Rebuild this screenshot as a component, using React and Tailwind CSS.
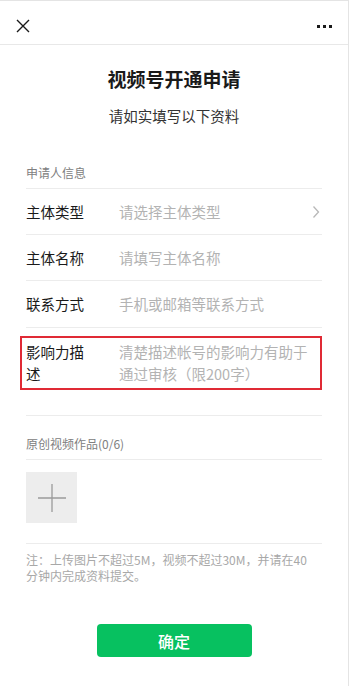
import React from "react";

const font = { fontFamily: '"Noto Sans CJK SC", "Noto Sans", sans-serif' };

function Row({ label, placeholder, chevron, tall }) {
  return (
    <div className={`flex items-center border-b border-[#ececec] ${tall ? "h-[47px]" : "h-[46px]"}`}>
      <div className="w-[64px] shrink-0 text-[14.5px] text-[#1a1a1a]">{label}</div>
      <div className="ml-[29px] flex-1 text-[14.5px] text-[#b3b3b3]">{placeholder}</div>
      {chevron && (
        <svg width="8" height="14" viewBox="0 0 8 14" className="mr-[2px]">
          <path d="M1.5 1.5 L6.5 7 L1.5 12.5" fill="none" stroke="#b8b8b8" strokeWidth="1.3" />
        </svg>
      )}
    </div>
  );
}

export default function App() {
  return (
    <div className="min-h-[686px] w-[351px] bg-white" style={font}>
      <div className="min-h-[686px] w-[349px] border-r border-t border-[#e4e4e4]">
        {/* header */}
        <div className="flex h-[44px] items-start justify-between border-b border-[#e8e8e8] px-[16px] pt-[18px]">
          <svg width="14" height="14" viewBox="0 0 14 14">
            <path d="M1 1 L13 13 M13 1 L1 13" stroke="#1a1a1a" strokeWidth="1.4" />
          </svg>
          <div className="mt-[6px] flex gap-[3px]">
            <span className="h-[3px] w-[3px] bg-[#1a1a1a]" />
            <span className="h-[3px] w-[3px] bg-[#1a1a1a]" />
            <span className="h-[3px] w-[3px] bg-[#1a1a1a]" />
          </div>
        </div>

        {/* title */}
        <div className="pt-[21px] text-center text-[19px] font-bold leading-[26px] text-[#1a1a1a]">
          视频号开通申请
        </div>
        <div className="mt-[14px] text-center text-[14.5px] leading-[20px] text-[#333]">
          请如实填写以下资料
        </div>

        <div className="px-[26px]">
          {/* section 1 */}
          <div className="mt-[38px] border-b border-[#ececec] pb-[6px] text-[12px] leading-[18px] text-[#808080]">
            申请人信息
          </div>
          <Row label="主体类型" placeholder="请选择主体类型" chevron />
          <Row label="主体名称" placeholder="请填写主体名称" />
          <Row label="联系方式" placeholder="手机或邮箱等联系方式" tall />

          <div className="border-b border-[#ececec] pb-[25px] pt-[8px]">
            <div className="-ml-[6px] flex border-2 border-[#e02a35] py-[3px] pl-[4px] pr-[4px]">
              <div className="w-[64px] shrink-0 text-[14.5px] leading-[22px] text-[#1a1a1a]">
                影响力描述
              </div>
              <div className="ml-[29px] flex-1 text-[14.5px] leading-[22px] text-[#b3b3b3]">
                清楚描述帐号的影响力有助于通过审核（限200字）
              </div>
            </div>
          </div>

          {/* section 2 */}
          <div className="border-b border-[#ececec] pb-[6px] pt-[19px] text-[12px] leading-[18px] text-[#808080]">
            原创视频作品(0/6)
          </div>
          <div className="border-b border-[#ececec] pb-[20px] pt-[12px]">
            <div className="flex h-[51px] w-[51px] items-center justify-center bg-[#ededed]">
              <svg width="28" height="28" viewBox="0 0 28 28">
                <path d="M14 0 V28 M0 14 H28" stroke="#9a9a9a" strokeWidth="1.3" />
              </svg>
            </div>
          </div>

          <div className="pt-[8px] text-[12px] leading-[16px] text-[#a8a8a8]">
            注：上传图片不超过5M，视频不超过30M，并请在40
            <br />
            分钟内完成资料提交。
          </div>
        </div>

        <div className="mt-[40px] flex justify-center">
          <button className="flex h-[33px] w-[155px] items-center justify-center rounded-[4px] bg-[#07c160] text-[16px] font-medium text-white">
            确定
          </button>
        </div>
      </div>
    </div>
  );
}
